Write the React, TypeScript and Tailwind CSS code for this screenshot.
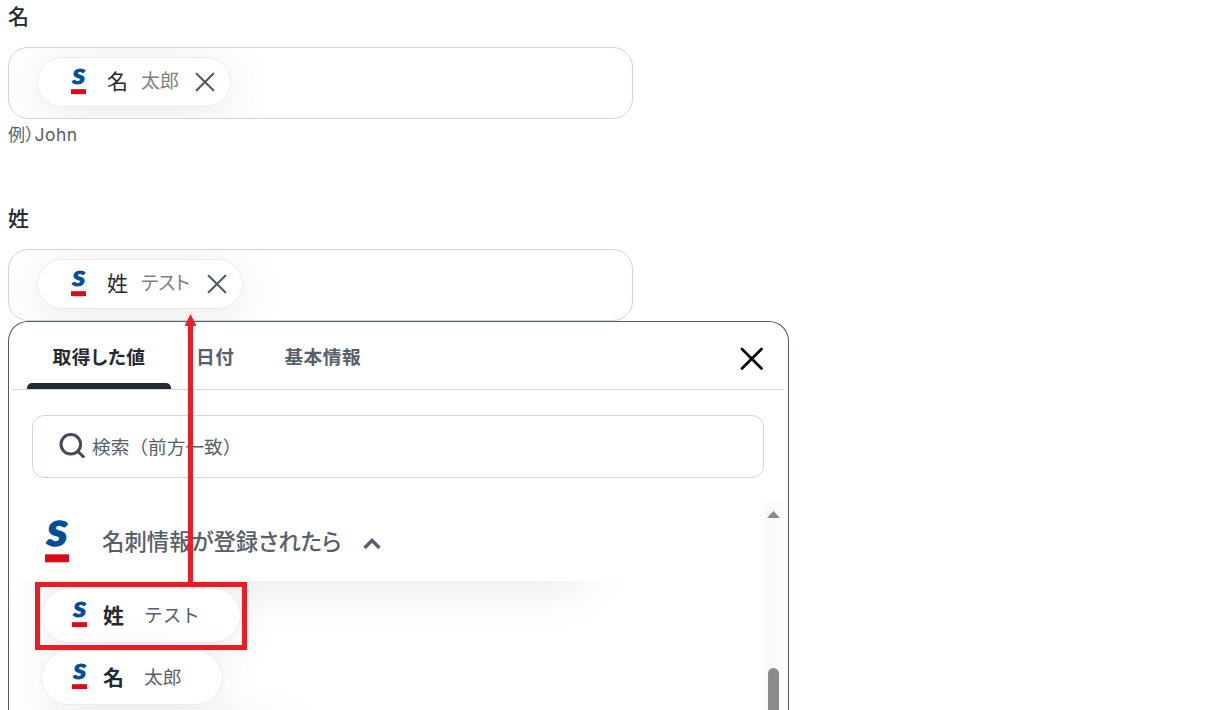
import { type ReactNode } from 'react';

type FieldProps = {
  label: string;
  children: ReactNode;
};

type TokenProps = {
  name: string;
  sample: string;
  className: string;
};

function Logo({ className }: { className: string }) {
  return (
    <svg viewBox="0 0 24 42" className={`overflow-visible ${className}`} aria-hidden="true">
      <text
        transform="translate(1.8 25.4) scale(1.13 1)"
        fontSize="34.5"
        fontWeight="900"
        fontStyle="italic"
        fill="#004e98"
        stroke="#004e98"
        strokeWidth="1.6"
        className="font-['Lato',sans-serif]"
      >
        S
      </text>
      <rect x="0" y="33.3" width="24" height="8" fill="#d70c18" />
    </svg>
  );
}

function CloseIcon({ className, width }: { className: string; width: number }) {
  return (
    <svg viewBox="0 0 24 24" className={className} fill="none" stroke="currentColor" strokeWidth={width} strokeLinecap="round">
      <path d="M2 2 22 22M22 2 2 22" />
    </svg>
  );
}

function Field({ label, children }: FieldProps) {
  return (
    <div>
      <p className="h-[47px] text-[21px] font-medium leading-[30px]">{label}</p>
      <div className="flex h-[72px] w-[625px] overflow-hidden rounded-[20px] border border-[#cfd5de] pl-7 pt-[9px]">{children}</div>
    </div>
  );
}

// Value already inserted in a field, with a remove button
function FieldToken({ name, sample, className }: TokenProps) {
  return (
    <div className={`flex h-[50px] items-center rounded-full border border-[#e9ebf0] bg-white pl-[33px] shadow-[0_7px_50px_rgba(0,0,0,0.09)] ${className}`}>
      <Logo className="mb-[1px] h-[27px] w-[15px] shrink-0" />
      <span className="mb-1 ml-[21px] text-[21px] leading-none">{name}</span>
      <span className="mb-[5px] ml-[13px] whitespace-nowrap text-[19px] leading-none text-[#808080]">{sample}</span>
      <CloseIcon className="mb-[1px] ml-auto mr-[15px] size-5 shrink-0 text-[#525a66]" width={2.5} />
    </div>
  );
}

// Value offered in the picker list
function ListToken({ name, sample, className }: TokenProps) {
  return (
    <div className={`flex h-[55px] shrink-0 items-center rounded-full border border-[#e9ebf0] bg-white pl-[30px] shadow-[0_7px_50px_rgba(0,0,0,0.07)] ${className}`}>
      <Logo className="mb-[2px] h-[27px] w-[15px] shrink-0" />
      <span className="mb-[3px] ml-[16px] text-[21px] font-semibold leading-none">{name}</span>
      <span className="mb-[2px] ml-[20px] whitespace-nowrap text-[18.7px] leading-none text-[#56606c] [font-feature-settings:normal]">{sample}</span>
    </div>
  );
}

function ValuePicker() {
  return (
    <section className="flex h-[389px] w-[781px] flex-col rounded-t-[20px] border border-b-0 border-[#525c69] bg-white pl-1 pr-[5px]">
      <header className="flex h-[68px] shrink-0 border-b border-[#cfd4e0] text-[18.7px] font-semibold tracking-[0.5px] text-[#56606c]">
        <div className="ml-[14px] flex w-[144px] flex-col items-center justify-between text-[#232a33]">
          <span className="whitespace-nowrap pt-[20px] leading-7">取得した値</span>
          <span className="h-[6px] w-full rounded-t-[5px] bg-[#232a33]" />
        </div>
        <span className="ml-[25px] pt-[20px] leading-7">日付</span>
        <span className="ml-[50px] pt-[20px] leading-7">基本情報</span>
        <CloseIcon className="ml-auto mr-[20px] mt-[25px] size-[23.5px] text-black" width={2.7} />
      </header>

      <div className="ml-[19px] mt-[25px] flex h-[63px] w-[732px] shrink-0 items-center rounded-[12px] border border-[#cfd4e0] pl-[26px] text-[#56606c]">
        <svg viewBox="0 0 26 26" className="mb-[2px] size-[26px]" fill="none" stroke="#434c57" strokeWidth="3">
          <circle cx="11.8" cy="11.3" r="9.8" />
          <path d="m18.8 18.3 6.4 6.2" />
        </svg>
        <span className="ml-[7px] text-[18.7px] leading-none [font-feature-settings:normal]">検索（前方一致）</span>
      </div>

      <div className="mt-[25px] flex min-h-0 grow">
        <div className="flex min-w-0 grow flex-col overflow-hidden">
          <div className="flex h-[78px] shrink-0 items-center pl-[32px]">
            <Logo className="h-[42px] w-6" />
            <h2 className="mb-[4px] ml-[33px] whitespace-nowrap text-[22.4px] font-medium leading-none text-[#56606c]">名刺情報が登録されたら</h2>
            <svg viewBox="0 0 18 12" className="ml-[22px] mt-[3px] h-3 w-[18px]" fill="none" stroke="#56606c" strokeWidth="3.4">
              <path d="m1.5 10 7.5-7.5 7.5 7.5" />
            </svg>
          </div>
          <div className="relative flex grow flex-col items-start gap-[7px] overflow-hidden pl-[28px] pt-[7px]">
            {/* shadow of the group heading, falling on the list */}
            <div className="absolute -top-[60px] left-[28px] h-[60px] w-[550px] rounded-full shadow-[0_7px_50px_rgba(0,0,0,0.09)]" />
            <ListToken name="姓" sample="テスト" className="relative w-[200px]" />
            <ListToken name="名" sample="太郎" className="relative w-[182px]" />
            <div className="h-[55px] w-[260px] shrink-0 rounded-full shadow-[0_7px_40px_rgba(0,0,0,0.06)]" />
          </div>
        </div>
        <div className="flex w-[19px] shrink-0 flex-col items-center bg-[#fafafa] pt-[8px]">
          <svg viewBox="0 0 13 7" className="h-[7px] w-[13px] shrink-0" fill="#8b8b8b">
            <path d="M6.5 0 13 7H0z" />
          </svg>
          <div className="mt-[150px] w-[11px] grow rounded-t-full bg-[#8b8b8b]" />
        </div>
      </div>
    </section>
  );
}

export default function App() {
  return (
    <main className="relative h-[710px] w-[1208px] overflow-hidden bg-white pl-2 font-['Noto_Sans_CJK_JP',sans-serif] text-[#232a33] [font-feature-settings:'palt']">
      <Field label="名">
        <FieldToken name="名" sample="太郎" className="w-[194px]" />
      </Field>
      <p className="h-[83px] pt-[2px] text-[17px] leading-[26px] tracking-[0.5px] text-[#56606c]">
        例）<span className="font-['Inter',sans-serif] text-[17.5px]">John</span>
      </p>
      <Field label="姓">
        <FieldToken name="姓" sample="テスト" className="w-[206px]" />
      </Field>
      <ValuePicker />

      {/* callout: the list value goes into the field above */}
      <svg viewBox="0 0 212 336" className="absolute left-[35px] top-[314px] h-[336px] w-[212px]" fill="none">
        <rect x="2.5" y="270.5" width="207" height="63" stroke="#ed1c24" strokeWidth="5" />
        <path d="M155.5 0 161 11V12H158V270H153V12H150V11z" fill="#ed1c24" />
      </svg>
    </main>
  );
}
